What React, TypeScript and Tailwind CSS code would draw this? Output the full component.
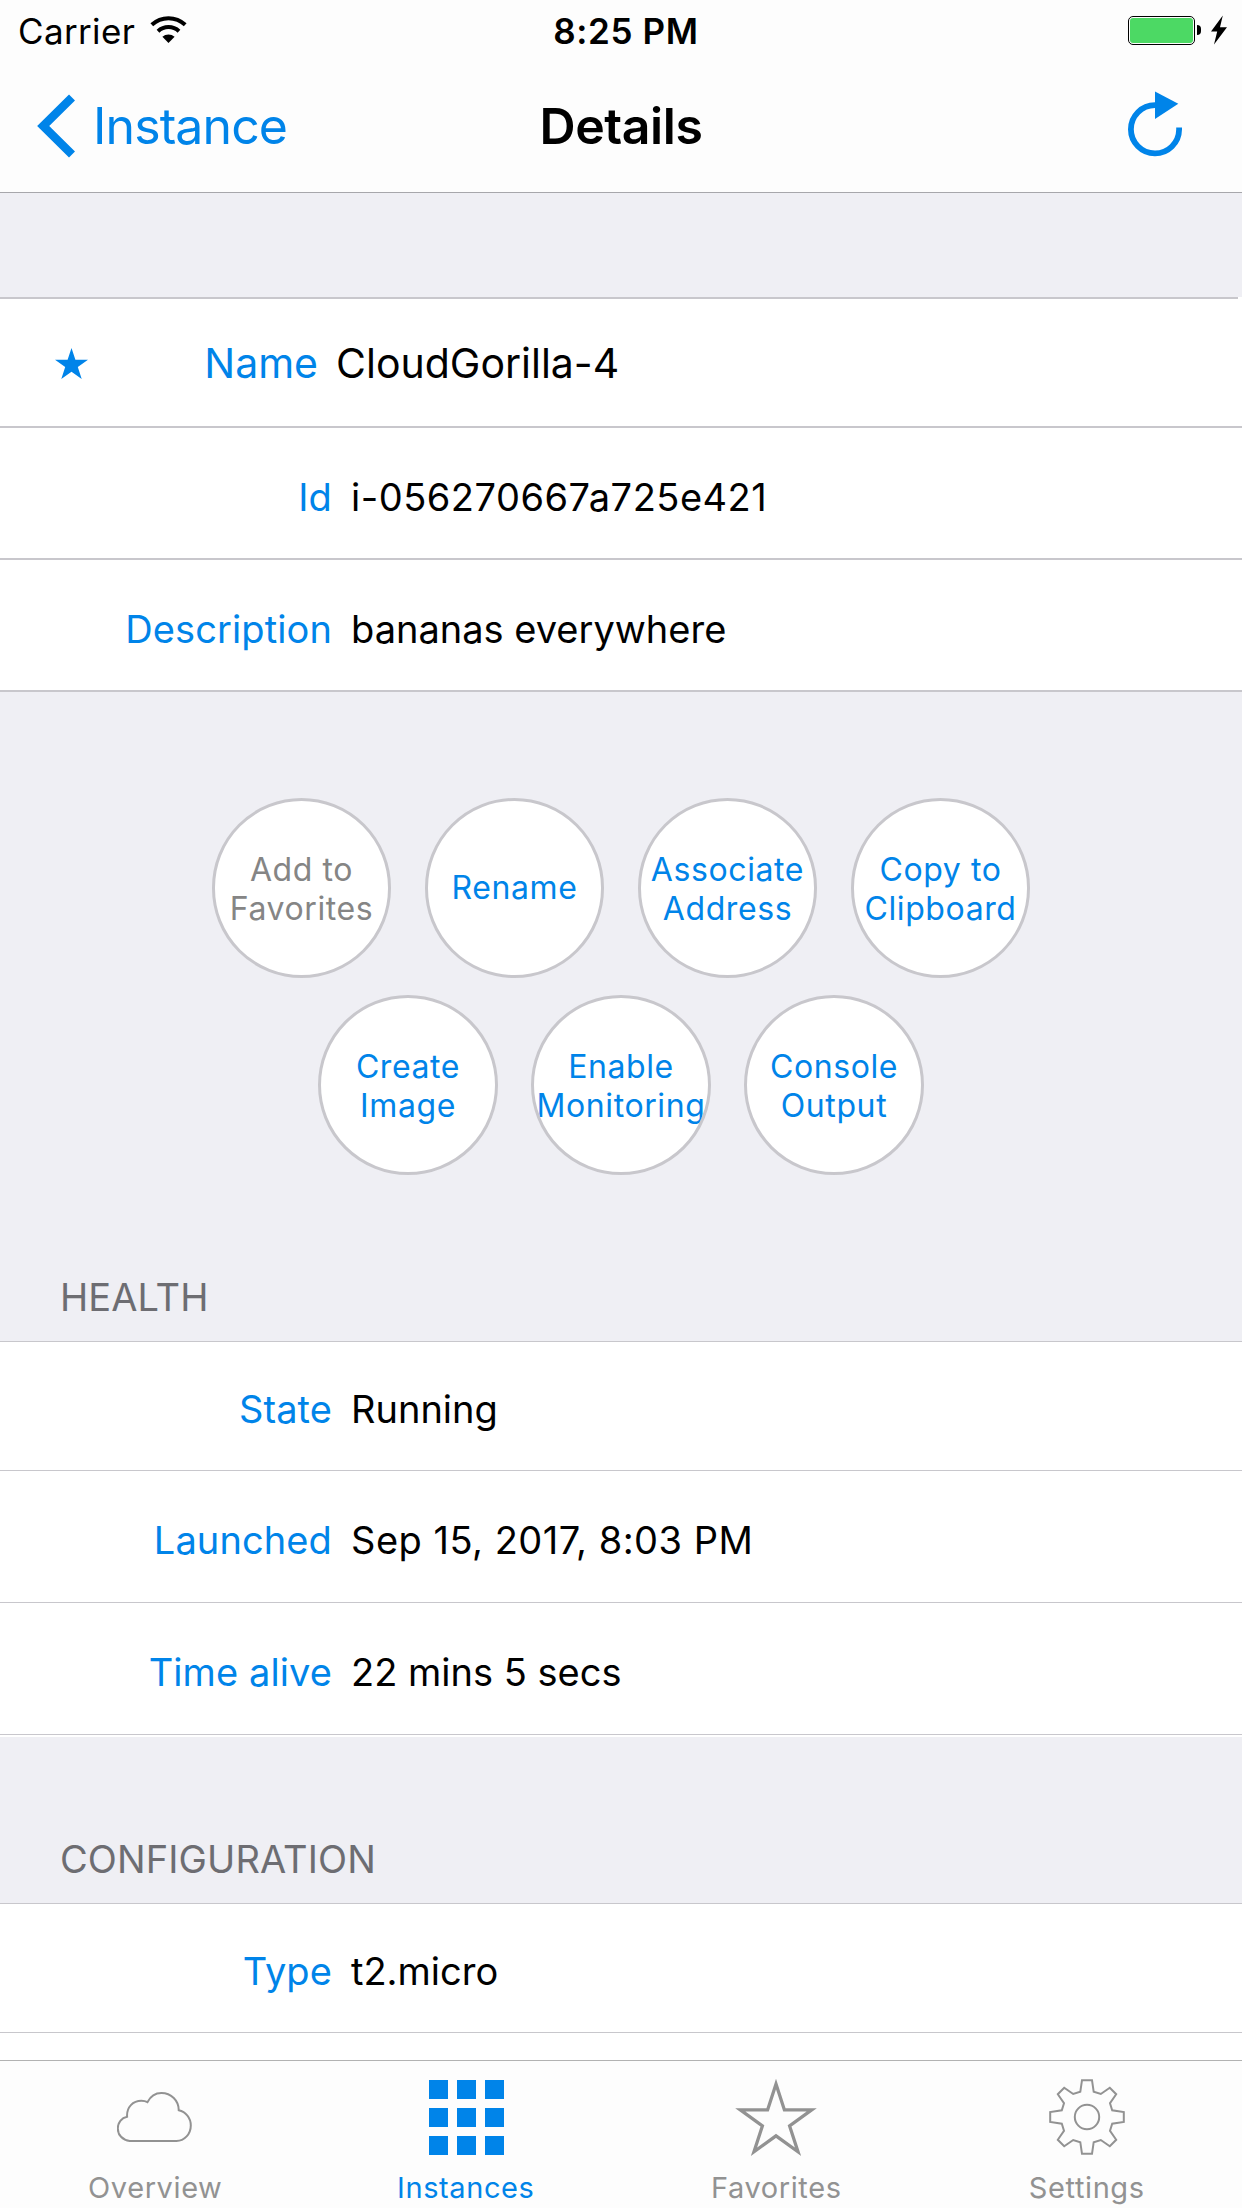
import clsx from "clsx";

type RowProps = {
  label: string;
  value: string;
  className?: string;
  valueClassName?: string;
};

const primaryActions = [
  { title: ["Add to", "Favorites"], disabled: true },
  { title: ["Rename"] },
  { title: ["Associate", "Address"] },
  { title: ["Copy to", "Clipboard"] },
];

const secondaryActions = [
  { title: ["Create", "Image"] },
  { title: ["Enable", "Monitoring"] },
  { title: ["Console", "Output"] },
];

const WifiIcon = () => (
  <svg width="37" height="28" viewBox="0 0 37 28" fill="none">
    <path d="M1.8 8.8a24.5 24.5 0 0 1 33.4 0" stroke="#000" strokeWidth="4" />
    <path d="M8 15.2a15.5 15.5 0 0 1 21 0" stroke="#000" strokeWidth="4" />
    <path d="M12.4 20.8a9 9 0 0 1 12.2 0L18.5 27z" fill="#000" />
  </svg>
);

const BoltIcon = () => (
  <svg width="16" height="30" viewBox="0 0 16 30" fill="#000">
    <path d="M11.8 0.5 0 16.5h6.2L3 29.5 16 12.3H9z" />
  </svg>
);

const RefreshIcon = () => (
  <svg width="56" height="66" viewBox="0 0 56 66" fill="none">
    <path d="M27 14.2a24.1 24.1 0 1 0 24.1 24.3v-2" stroke="#0084e9" strokeWidth="5.8" />
    <path d="M27 0.5v27.5L50.3 12.8z" fill="#0084e9" />
  </svg>
);

const CloudIcon = () => (
  <svg width="76" height="52" viewBox="0 0 76 52" fill="none" stroke="#929292" strokeWidth="2">
    <path d="M12.75 50C5.5 49 .8 44 .8 37.5C.8 31.5 4.5 26.8 10.1 25.7C9.5 16 16 9.8 24.4 9.8C26.6 9.8 28.6 10.2 30.4 11.2C33.3 5.6 38.5 2 44.4 2C54.2 2 61.8 9.6 61.75 19.3C68.8 20.8 73.8 27 73.8 34.5C73.8 43 67.5 50 59.4 50z" />
  </svg>
);

const GridIcon = () => (
  <div className="ml-[2px] grid grid-cols-3 gap-[9px]">
    {Array.from({ length: 9 }, (_, i) => (
      <div key={i} className="size-[19px] bg-[#0084e9]" />
    ))}
  </div>
);

const StarIcon = () => (
  <svg width="82" height="80" viewBox="0 -2 82 80" fill="none" stroke="#929292" strokeWidth="3.3">
    <path d="M41 5 49.4 30.9H76.7L54.6 46.9 63 72.8 41 56.8 19 72.8 27.4 46.9 5.3 30.9H32.6z" />
  </svg>
);

const GearIcon = () => (
  <svg width="76" height="76" viewBox="0 0 76 76" fill="none" stroke="#929292" strokeWidth="2">
    <path d="M33 1.2 43 1.2 44.7 12.8 51.8 15 60.8 8.8 67.2 15.2 61 24.2 63.2 31.3 74.8 33 74.8 43 63.2 44.7 61 51.8 67.2 60.8 60.8 67.2 51.8 61 44.7 63.2 43 74.8 33 74.8 31.3 63.2 24.2 61 15.2 67.2 8.8 60.8 15 51.8 12.8 44.7 1.2 43 1.2 33 12.8 31.3 15 24.2 8.8 15.2 15.2 8.8 24.2 15 31.3 12.8z" />
    <circle cx="38" cy="38" r="12.2" />
  </svg>
);

const Row = ({ label, value, className, valueClassName }: RowProps) => (
  <div
    className={clsx(
      "flex shrink-0 items-center gap-[19px] border-[#c8c7cc] bg-white text-[38px] whitespace-nowrap",
      className
    )}
  >
    <span className="w-[332px] text-right tracking-[0.1px] text-[#0084e9]">{label}</span>
    <span className={clsx("text-black", valueClassName)}>{value}</span>
  </div>
);

const ActionButton = ({ title, disabled }: { title: string[]; disabled?: boolean }) => (
  <button
    className={clsx(
      "flex size-[179.5px] flex-col items-center justify-center overflow-hidden rounded-full border-3 border-[#c8c7cc] bg-white text-[32px] leading-[39px] tracking-[0.6px] whitespace-nowrap",
      title.length > 1 ? "pt-[2px]" : "pb-px",
      disabled ? "text-[#858585]" : "text-[#0084e9]"
    )}
  >
    {title.map((line) => (
      <span key={line}>{line}</span>
    ))}
  </button>
);

const SectionHeader = ({ title, className }: { title: string; className?: string }) => (
  <div
    className={clsx(
      "flex shrink-0 items-end pb-[21px] pl-[60px] text-[38px] leading-[46px] tracking-[0.1px] text-[#6d6d72]",
      className
    )}
  >
    {title}
  </div>
);

const tabs = [
  { name: "Overview", icon: <CloudIcon /> },
  { name: "Instances", icon: <GridIcon />, active: true },
  { name: "Favorites", icon: <StarIcon /> },
  { name: "Settings", icon: <GearIcon /> },
];

const App = () => {
  return (
    <div className="flex h-[2208px] w-[1242px] flex-col overflow-hidden bg-[#efeff4] font-['Inter',sans-serif]">
      <header className="h-[193px] shrink-0 border-b border-[#a7a7ab] bg-[#fdfdfd]">
        <div className="grid h-[60px] grid-cols-3 items-center px-[18px] text-[35px] text-black">
          <div className="flex items-center gap-[15px]">
            <span className="pt-[2px] tracking-[0.35px]">Carrier</span>
            <WifiIcon />
          </div>
          <span className="pt-[2px] pl-[10px] text-center font-semibold tracking-[0.6px]">8:25 PM</span>
          <div className="-mr-[3px] flex items-center justify-end">
            <div className="h-[29px] w-[67px] rounded-[5px] border border-black p-px">
              <div className="size-full rounded-[3px] bg-[#4cd964]" />
            </div>
            <div className="ml-[2px] h-[10px] w-[4px] rounded-r-full bg-black" />
            <div className="ml-[10px]">
              <BoltIcon />
            </div>
          </div>
        </div>
        <div className="grid h-[132px] grid-cols-3 items-center px-[37px]">
          <div className="flex items-center gap-[18px] text-[50px] tracking-[-0.9px] text-[#0084e9]">
            <svg width="38" height="64" viewBox="0 0 38 64" fill="none">
              <path d="M35 3.5 6.2 32 35 60.5" stroke="#0084e9" strokeWidth="8.5" />
            </svg>
            <span>Instance</span>
          </div>
          <h1 className="text-center text-[50px] font-semibold tracking-[-0.4px]">Details</h1>
          <div className="mr-[21px] flex justify-end pb-[5px]">
            <RefreshIcon />
          </div>
        </div>
      </header>

      <div className="mt-[104px] flex h-[131px] shrink-0 flex-col bg-white">
        <div className="mr-1 h-[2px] bg-[#c8c7cc]" />
        <div className="flex flex-1 items-center border-b-2 border-[#c8c7cc] pt-px text-[41px] whitespace-nowrap">
          <svg className="ml-[55px]" width="33" height="31" viewBox="0 0 33 31" fill="#0084e9">
            <path d="M16.5 0 20.4 11.8H33L22.8 19.1 26.7 31 16.5 23.7 6.3 31 10.2 19.1 0 11.8H12.6z" />
          </svg>
          <span className="w-[230px] pt-[2px] text-right text-[#0084e9]">Name</span>
          <span className="ml-[18px] pt-[2px] text-black">CloudGorilla-4</span>
        </div>
      </div>
      <Row
        label="Id"
        value="i-056270667a725e421"
        className="h-[132px] border-b-2 pt-2"
        valueClassName="tracking-[0.5px]"
      />
      <Row label="Description" value="bananas everywhere" className="h-[132px] border-b-2 pt-2" />

      <div className="mt-[106px] flex shrink-0 flex-col items-center gap-[17.5px]">
        <div className="flex gap-[33.5px]">
          {primaryActions.map((action) => (
            <ActionButton key={action.title[0]} {...action} />
          ))}
        </div>
        <div className="flex gap-[33.5px]">
          {secondaryActions.map((action) => (
            <ActionButton key={action.title[0]} {...action} />
          ))}
        </div>
      </div>

      <SectionHeader title="HEALTH" className="h-[166.5px]" />
      <Row label="State" value="Running" className="h-[130px] border-y pt-1.5" />
      <Row
        label="Launched"
        value="Sep 15, 2017, 8:03 PM"
        className="h-[132px] border-b pt-2"
        valueClassName="tracking-[0.5px]"
      />
      <Row label="Time alive" value="22 mins 5 secs" className="h-[132px] border-b pt-2" />

      <div className="h-[2px] shrink-0 bg-white" />
      <SectionHeader title="CONFIGURATION" className="h-[166px]" />
      <Row label="Type" value="t2.micro" className="h-[130px] border-y pt-1.5" />
      <div className="h-[27px] shrink-0 bg-white" />

      <nav className="grid h-[148px] shrink-0 grid-cols-4 border-t border-[#b2b2b2] bg-[#fdfdfd]">
        {tabs.map((tab) => (
          <div
            key={tab.name}
            className={clsx(
              "flex flex-col items-center text-[29px] leading-[36px] tracking-[0.6px]",
              tab.active ? "text-[#0084e9]" : "text-[#929292]"
            )}
          >
            <div className="flex h-[109px] items-center pt-[3px]">{tab.icon}</div>
            <span>{tab.name}</span>
          </div>
        ))}
      </nav>
    </div>
  );
};

export default App;
